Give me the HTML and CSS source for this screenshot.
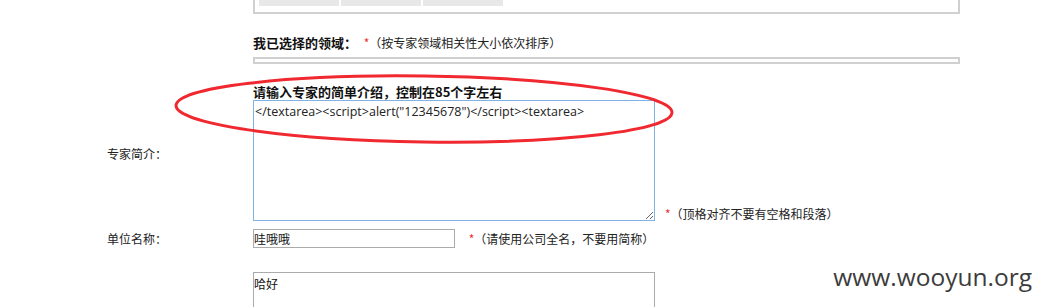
FILE: index.html
```html
<!DOCTYPE html>
<html lang="zh-CN">
<head>
  <meta charset="UTF-8" />
  <title>专家信息</title>
  <link rel="stylesheet" href="styles.css">
</head>
<body>

  <div class="form">

    <div class="row">
      <div class="label"></div>
      <div class="field">
        <div class="area-box">
          <span class="tab">信息技术</span>
          <span class="tab">电子商务</span>
          <span class="tab">管理咨询</span>
        </div>
      </div>
    </div>

    <div class="row title-row">
      <div class="label"></div>
      <div class="field">
        <strong>我已选择的领域：</strong>
        <span class="star">*</span><span class="hint">（按专家领域相关性大小依次排序）</span>
      </div>
    </div>

    <div class="row">
      <div class="label"></div>
      <div class="field"><div class="chosen-box"></div></div>
    </div>

    <div class="row intro-row">
      <div class="label intro-label">专家简介：</div>
      <div class="field">
        <div class="sub-title">请输入专家的简单介绍，控制在85个字左右</div>
        <div class="intro-line">
          <textarea class="intro-text">&lt;/textarea&gt;&lt;script&gt;alert("12345678")&lt;/script&gt;&lt;textarea&gt;</textarea>
          <span class="note"><span class="star">*</span><span class="hint">（顶格对齐不要有空格和段落）</span></span>
        </div>
      </div>
    </div>

    <div class="row unit-row">
      <div class="label">单位名称：</div>
      <div class="field">
        <input class="unit-input" type="text" value="哇哦哦">
        <span class="star">*</span><span class="hint">（请使用公司全名，不要用简称）</span>
      </div>
    </div>

    <div class="row">
      <div class="label"></div>
      <div class="field">
        <textarea class="plain-text">哈好</textarea>
      </div>
    </div>

  </div>

  <!-- red mark drawn over the intro field -->
  <svg class="mark" width="520" height="90" viewBox="0 0 520 90">
    <ellipse cx="251" cy="37" rx="248" ry="33" fill="none" stroke="#f0282f" stroke-width="3" transform="rotate(0.8 251 37)"/>
  </svg>

  <div class="watermark">www.wooyun.org</div>

</body>
</html>
```

FILE: styles.css
```css
body {
  margin: 0;
  background: #fff;
  font-family: "Noto Sans CJK SC", "Noto Sans", sans-serif;
  font-size: 12px;
  color: #222;
  overflow: hidden;
  height: 307px;
}

.form {
  padding-left: 107px;
}

.row {
  display: grid;
  grid-template-columns: 146px 707px;
}

.area-box {
  margin-top: -22px;
  height: 34px;
  border: 2px solid #d0d0d0;
  border-top: none;
  padding: 0 4px;
  display: flex;
  gap: 2px;
}

.tab {
  width: 80px;
  height: 28px;
  background: #e8e8e8;
  text-align: center;
  line-height: 20px;
  font-weight: bold;
  color: #111;
}

.title-row {
  margin-top: 20px;
  line-height: 18px;
}

.title-row strong {
  font-size: 13px;
  color: #111;
  margin-right: 4px;
}

.star {
  color: #f03030;
  font-size: 12px;
}

.hint {
  color: #222;
}

.chosen-box {
  margin-top: 5px;
  height: 3px;
  border: 2px solid #d0d0d0;
}

.intro-row {
  margin-top: 19px;
}

.intro-label {
  align-self: center;
  padding-top: 2px;
}

.sub-title {
  font-weight: bold;
  font-size: 13px;
  color: #111;
  line-height: 17px;
}

.intro-line {
  display: flex;
  align-items: flex-end;
  gap: 10px;
}

.intro-text {
  width: 402px;
  height: 121px;
  box-sizing: border-box;
  margin: 0;
  border: 1px solid #7fb2e5;
  padding: 2px 1px;
  font-family: "Open Sans", sans-serif;
  font-size: 12.5px;
  line-height: 17px;
  color: #222;
  resize: both;
  outline: none;
}

.note {
  margin-bottom: -1px;
}

.unit-row {
  margin-top: 8px;
  align-items: center;
}

.unit-input {
  width: 202px;
  height: 19px;
  box-sizing: border-box;
  margin: 0 11px 0 0;
  border: 1px solid #ababab;
  padding: 0;
  font-family: "Noto Sans CJK SC", sans-serif;
  font-size: 12px;
  color: #111;
}

.plain-text {
  margin-top: 24px;
  width: 402px;
  height: 36px;
  box-sizing: border-box;
  border: 1px solid #ababab;
  border-bottom: none;
  padding: 2px 0;
  font-family: "Noto Sans CJK SC", sans-serif;
  font-size: 12px;
  color: #111;
  resize: none;
}

.mark {
  position: absolute;
  left: 173px;
  top: 72px;
}

.watermark {
  position: absolute;
  right: 10px;
  bottom: 14px;
  font-family: "Open Sans", sans-serif;
  font-size: 24.5px;
  color: #3c3c3c;
}
```
